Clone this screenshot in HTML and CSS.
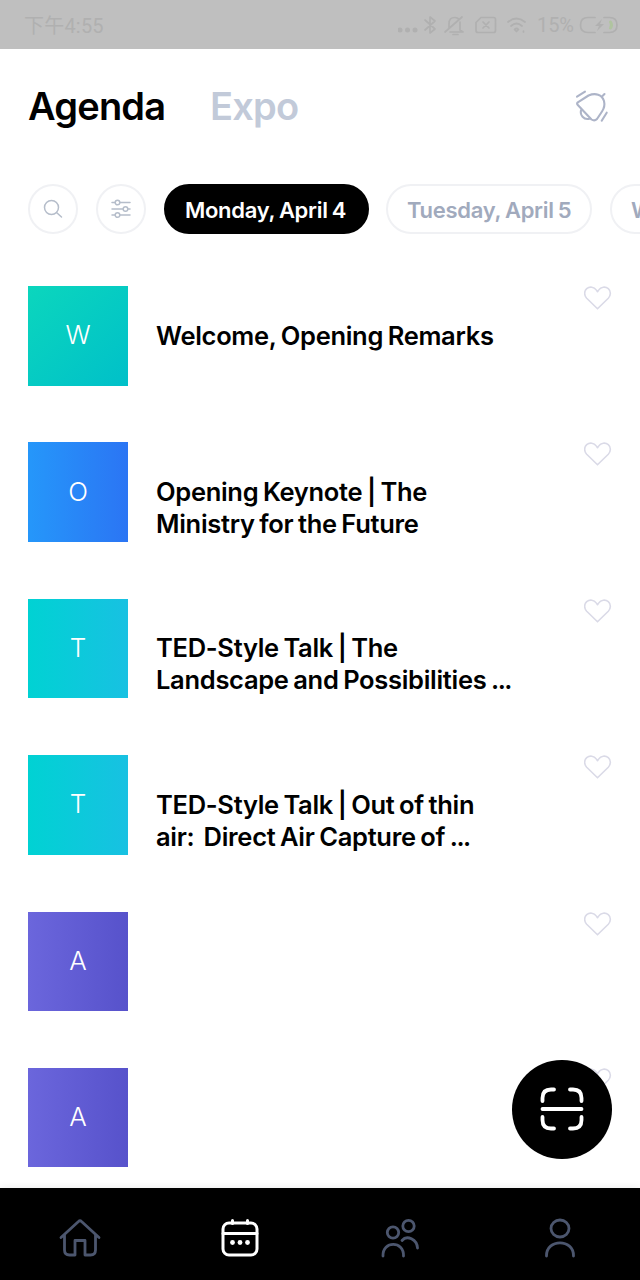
FILE: index.html
```
<!DOCTYPE html>
<html lang="en">
<head>
    <meta charset="UTF-8">
    <meta name="viewport" content="width=device-width, initial-scale=1.0">
    <title>Agenda</title>
    <link rel="stylesheet" href="styles.css">
</head>
<body>
    <svg class="symbols">
        <symbol id="heart" viewBox="0 0 28 24">
            <path d="M13.500 22.800 2.700 12.200C-.1 9.200 0 5.100 2.700 2.700c3-2.500 7.400-1.900 9.500 1.200l1.300 1.800 1.300-1.800c2.100-3.100 6.500-3.700 9.500-1.200 2.700 2.400 2.800 6.500 0 9.500z"/>
        </symbol>
    </svg>
    <div class="status-bar">
        <span class="time">下午4:55</span>
        <svg class="status-icons" width="134" height="22" viewBox="0 0 134 22">
            <g class="dots"><circle cx="2" cy="16" r="2.500"/><circle cx="9.500" cy="16" r="2.500"/><circle cx="17" cy="16" r="2.500"/></g>
            <path d="m27 6 10 9-5 4V3l5 4-10 9"/>
            <path d="M51 14V9.500c0-4 2-6 5.500-6 1.500 0 2.500.3 3.500 1M62 8v8l3 2H52M55 20.500h5M47 18 64 3"/>
            <path d="M83 3.500h12.500q2 0 2 2v11q0 2-2 2H80q-2 0-2-2v-8zM85 8l6 6m0-6-6 6"/>
            <path d="M110 8q8.500-7 17 0M113 12q5.500-5 11 0M116.500 15.500q2-2 4 0l-2 2zM125.500 17v1"/>
        </svg>
        <span class="percent">15%</span>
        <svg class="battery" width="40" height="20" viewBox="0 0 40 20">
            <path d="M16 2.500H9Q1.500 2.500 1.500 10T9 17.500h7M25 2.500h5.500q7.500 0 7.500 7.500t-7.500 7.500H25"/>
            <path class="bolt" d="m23 4-7 7h4l-2 5 7-7h-4z"/>
            <path class="charge" d="M31.500 7q2 3 0 6"/>
        </svg>
    </div>

    <div class="header">
        <div class="tab active">Agenda</div>
        <div class="tab">Expo</div>
        <svg class="bell" width="34" height="36" viewBox="0 0 34 36">
            <path d="M2.800 13.300 13.500 6.500c7-3 13.500-1 15.500 5.500 1 4 0 7.500-2 10.500l-5 7.500q-2.500 2.500-5.500.5L2.800 16q-1.300-1.300 0-2.700zM27 7.500l2.500-2.500M6.500 20c-2.500 6 2.500 11.500 8.500 9.500M2 7.700l8-5M26.700 31.700l5-8"/>
        </svg>
    </div>

    <div class="filters">
        <div class="round-btn">
            <svg width="20" height="20" viewBox="0 0 20 20"><circle cx="8.500" cy="8.500" r="7"/><path d="m13.500 13.500 5 4.500"/></svg>
        </div>
        <div class="round-btn">
            <svg width="20" height="20" viewBox="0 0 20 20"><path d="M1 3.500h3m5 0h10M1 10h11m5 0h2M1 16h3m5 0h10"/><circle cx="6.500" cy="3.500" r="2.300"/><circle cx="14.500" cy="10" r="2.300"/><circle cx="6.500" cy="16" r="2.300"/></svg>
        </div>
        <div class="day active">Monday, April 4</div>
        <div class="day">Tuesday, April 5</div>
        <div class="day">Wednesday, April 6</div>
    </div>

    <div class="sessions">
        <div class="session">
            <div class="thumb green">W</div>
            <div class="title">Welcome, Opening Remarks</div>
            <svg class="heart"><use href="#heart"/></svg>
        </div>
        <div class="session">
            <div class="thumb blue">O</div>
            <div class="title">Opening Keynote | The<br>Ministry for the Future</div>
            <svg class="heart"><use href="#heart"/></svg>
        </div>
        <div class="session">
            <div class="thumb cyan">T</div>
            <div class="title">TED-Style Talk | The<br>Landscape and Possibilities <span class="more">...</span></div>
            <svg class="heart"><use href="#heart"/></svg>
        </div>
        <div class="session">
            <div class="thumb cyan">T</div>
            <div class="title">TED-Style Talk | Out of thin<br>air:&nbsp; Direct Air Capture of <span class="more">...</span></div>
            <svg class="heart"><use href="#heart"/></svg>
        </div>
        <div class="session">
            <div class="thumb purple">A</div>
            <div class="title"></div>
            <svg class="heart"><use href="#heart"/></svg>
        </div>
        <div class="session">
            <div class="thumb purple">A</div>
            <div class="title"></div>
            <svg class="heart"><use href="#heart"/></svg>
        </div>
    </div>

    <div class="scan-btn">
        <svg width="44" height="44" viewBox="0 0 44 44">
            <path d="M2.500 14v-3q0-8.500 8.500-8.500h3M30 2.500h3q8.500 0 8.500 8.500v3M2.500 22h39M2.500 30v3q0 8.500 8.500 8.500h3M30 41.500h3q8.500 0 8.500-8.500v-3"/>
        </svg>
    </div>

    <div class="navbar">
        <div class="nav-item">
            <svg width="42" height="40" viewBox="0 0 42 40"><path d="m2 19.500 17.500-16q1.500-1.500 3 0L40 19.500M5.500 17v15q0 5 5 5H16V22.500h10V37h5.500q5 0 5-5V17"/></svg>
        </div>
        <div class="nav-item active">
            <svg width="42" height="40" viewBox="0 0 42 40"><rect x="4" y="5" width="34" height="32" rx="6"/><path d="M4 15.500h34M13.500 2.500v3M28.500 2.500v3"/><g class="dots"><circle cx="13.500" cy="24.500" r="2.400"/><circle cx="21" cy="24.500" r="2.400"/><circle cx="28.500" cy="24.500" r="2.400"/></g></svg>
        </div>
        <div class="nav-item">
            <svg width="42" height="40" viewBox="0 0 42 40"><circle cx="14" cy="14.500" r="5.700"/><circle cx="29.500" cy="8" r="5.700"/><path d="M4 38c-.5-15.500 21-15.500 20.500 0M23 22.500c5-6 15-1 15.500 7.500"/></svg>
        </div>
        <div class="nav-item">
            <svg width="42" height="40" viewBox="0 0 42 40"><ellipse cx="21" cy="10.500" rx="9" ry="8.500"/><path d="M7.500 38c-.5-17.500 27.500-17.500 27 0"/></svg>
        </div>
    </div>
</body>
</html>
```

FILE: styles.css
```
* {
    box-sizing: border-box;
}
body {
    margin: 0;
    width: 640px;
    height: 1280px;
    background: #fff;
    font-family: Inter, "Liberation Sans", sans-serif;
    overflow: hidden;
    position: relative;
}
svg {
    display: block;
    flex: none;
    fill: none;
    stroke-linecap: round;
    stroke-linejoin: round;
}
.symbols {
    position: absolute;
    width: 0;
    height: 0;
}
.dots {
    fill: currentColor;
    stroke: none;
}

/* status bar */
.status-bar {
    height: 49px;
    background: #bfbfbf;
    color: #b0b0b0;
    display: flex;
    align-items: center;
    padding: 0 21px 0 24px;
    font-family: Roboto, "Noto Sans CJK SC", sans-serif;
    font-size: 20px;
    white-space: nowrap;
}
.time {
    letter-spacing: 0.2px;
}
.status-icons {
    margin-left: auto;
    stroke: #b0b0b0;
    stroke-width: 1.7;
}
.percent {
    margin-left: 5px;
    width: 40px;
    letter-spacing: -0.1px;
}
.battery {
    margin-left: 2px;
    stroke: #b0b0b0;
    stroke-width: 1.7;
}
.bolt {
    fill: #b0b0b0;
    stroke: none;
}
.charge {
    stroke: #b0c4a0;
    stroke-width: 3;
}

/* header */
.header {
    height: 135px;
    padding: 0 31px 19px 28px;
    display: flex;
    align-items: center;
}
.tab {
    padding-bottom: 2px;
    color: #c2cad9;
    font-size: 38px;
    font-weight: 600;
    letter-spacing: -0.8px;
}
.tab.active {
    width: 182px;
    color: #000;
}
.bell {
    margin-left: auto;
    stroke: #adb4c8;
    stroke-width: 2.1;
}

/* filters */
.filters {
    display: flex;
    gap: 18px;
    height: 50px;
    padding-left: 28px;
    overflow: hidden;
}
.round-btn {
    flex: none;
    width: 50px;
    height: 50px;
    border: 2px solid #f0f1f4;
    border-radius: 50%;
    display: flex;
    align-items: center;
    justify-content: center;
}
.round-btn svg {
    stroke: #b5bdca;
    stroke-width: 1.5;
}
.day {
    flex: none;
    width: 206px;
    border: 2px solid #f0f1f4;
    border-radius: 25px;
    padding: 1px 0 0 19px;
    display: flex;
    align-items: center;
    color: #a1aabd;
    font-size: 22px;
    font-weight: 580;
    letter-spacing: -0.3px;
    word-spacing: -1px;
    white-space: nowrap;
}
.day.active {
    width: 205px;
    margin-right: -1px;
    background: #000;
    border-color: #000;
    color: #fff;
}

/* sessions */
.sessions {
    padding: 52px 28px 0;
    display: grid;
    grid-auto-rows: 156.4px;
}
.session {
    display: flex;
}
.thumb {
    flex: none;
    width: 100px;
    height: 99.5px;
    padding-bottom: 2px;
    display: flex;
    align-items: center;
    justify-content: center;
    color: #fff;
    font-size: 26px;
    font-weight: 300;
}
.green {
    background: linear-gradient(135deg, #0bd6bd, #00c0c9);
}
.blue {
    background: linear-gradient(90deg, #2597fa, #2b75f4);
}
.cyan {
    background: linear-gradient(90deg, #00d2d3, #18c1e2);
}
.purple {
    background: linear-gradient(90deg, #6b66dc, #5752cb);
}
.title {
    flex: 1;
    padding: 33.5px 0 0 28px;
    font-size: 25.5px;
    font-weight: 580;
    line-height: 32px;
    letter-spacing: -0.3px;
    word-spacing: -1.5px;
    white-space: nowrap;
}
.more {
    letter-spacing: -1.5px;
}
.heart {
    width: 28px;
    height: 24px;
    stroke: #dadae7;
    stroke-width: 1.6;
}

.scan-btn {
    position: absolute;
    left: 512px;
    top: 1059.5px;
    width: 99.5px;
    height: 99.5px;
    border-radius: 50%;
    background: #000;
    display: flex;
    align-items: center;
    justify-content: center;
}
.scan-btn svg {
    stroke: #fff;
    stroke-width: 3.8;
}

/* bottom navigation */
.navbar {
    position: absolute;
    left: 0;
    bottom: 0;
    width: 100%;
    height: 92px;
    background: #000;
    box-shadow: 0 -1px 8px rgba(0,0,0,0.08);
    display: flex;
}
.nav-item {
    flex: 1;
    display: flex;
    align-items: center;
    justify-content: center;
    padding-top: 8px;
    color: #fff;
}
.nav-item svg {
    stroke: #4c566e;
    stroke-width: 2.8;
}
.nav-item.active svg {
    stroke: #fff;
    stroke-width: 3;
}
```
